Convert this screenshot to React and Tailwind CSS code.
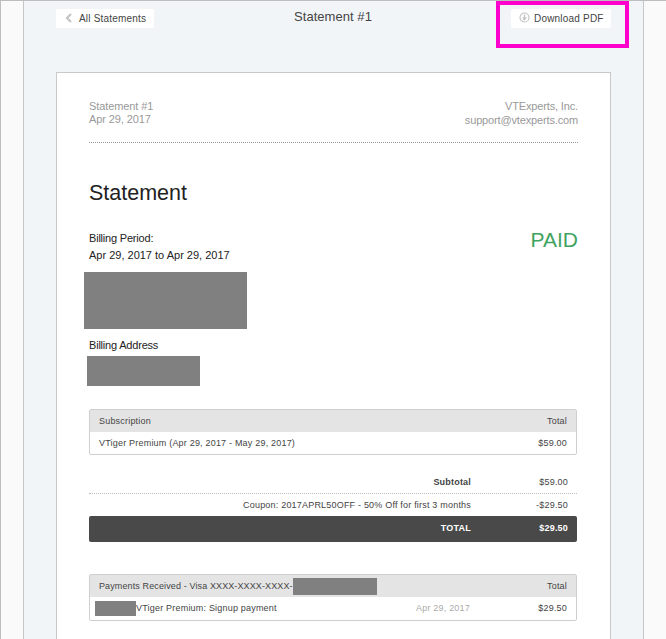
import React from "react";

function Btn({ icon, children, w }) {
  return (
    <div className={`h-[19px] flex items-center bg-white rounded-[2px] text-[10px] tracking-[0.2px] text-[#444] ${w}`}>
      {icon}
      {children}
    </div>
  );
}

export default function App() {
  return (
    <div className="relative w-[666px] h-[639px] overflow-hidden bg-[#fafafa] font-['Liberation_Sans',Arial,sans-serif] border-t border-l border-[#bdbdbd]">
      <div className="ml-[22px] w-[621px] h-[638px] bg-[#f2f5f8] border-x border-[#c6c6c6] px-[32px] overflow-hidden">
        <div className="h-[71px] flex items-start justify-between pt-[8px] relative">
          <Btn w="w-[98px] pl-[9px]" icon={
            <svg width="8" height="10" viewBox="0 0 8 10" className="mr-[6px] -mt-[2px]"><path d="M6 1 L2 5 L6 9" fill="none" stroke="#c4c4c4" strokeWidth="2.2" /></svg>
          }>All Statements</Btn>
          <div className="absolute left-[238px] top-[7px] text-[13px] leading-[18px] tracking-[0.05px] text-[#444]">Statement #1</div>
          <Btn w="w-[100px] pl-[8px]" icon={
            <svg width="11" height="11" viewBox="0 0 11 11" className="mr-[4px] -mt-[3px]"><circle cx="5.5" cy="5.5" r="4.5" fill="none" stroke="#c4c4c4" strokeWidth="1.2" /><path d="M5.5 2.5 V7 M3.8 5.5 L5.5 7.6 L7.2 5.5" fill="none" stroke="#c4c4c4" strokeWidth="1.3" /></svg>
          }>Download PDF</Btn>
        </div>

        <div className="w-[555px] h-[600px] bg-white border border-[#c9c9c9] px-[32px]">
          <div className="pt-[26px] h-[70px] flex justify-between border-b border-dotted border-[#999] text-[11px] text-[#999]">
            <div className="leading-[13px] pt-[1px] tracking-[-0.1px]">
              <div>Statement #1</div>
              <div>Apr 29, 2017</div>
            </div>
            <div className="text-right leading-[14px] tracking-[-0.15px]">
              <div>VTExperts, Inc.</div>
              <div>support@vtexperts.com</div>
            </div>
          </div>

          <div className="mt-[37px] text-[21.5px] leading-[26px] text-[#222]">Statement</div>

          <div className="mt-[24px] flex justify-between">
            <div className="text-[11px] leading-[17px] text-[#222]">
              <div className="tracking-[-0.2px]">Billing Period:</div>
              <div>Apr 29, 2017 to Apr 29, 2017</div>
            </div>
            <div className="text-[21px] leading-[24px] text-[#3fa35f] -mt-[2px]">PAID</div>
          </div>

          <div className="mt-[8px] -ml-[5px] w-[163px] h-[57px] bg-[#808080]" />
          <div className="mt-[9px] text-[11px] leading-[14px] tracking-[-0.2px] text-[#222]">Billing Address</div>
          <div className="mt-[4px] -ml-[2px] w-[113px] h-[30px] bg-[#808080]" />

          <div className="mr-[1px]">
            <div className="mt-[23px] border border-[#cfcfcf] rounded-[2px] text-[9px] tracking-[0.2px] text-[#444]">
              <div className="h-[22px] pt-[2px] bg-[#e4e4e4] flex items-center justify-between px-[9px]">
                <span>Subscription</span><span>Total</span>
              </div>
              <div className="h-[22px] pt-[2px] flex items-center justify-between px-[9px]">
                <span>VTiger Premium (Apr 29, 2017 - May 29, 2017)</span><span>$59.00</span>
              </div>
            </div>

            <div className="mt-[16px] text-[9px] tracking-[0.2px] text-[#444]">
              <div className="h-[23px] pt-[2px] flex items-center justify-end border-b border-dotted border-[#bbb]">
                <span className="font-bold">Subtotal</span><span className="w-[106px] text-right pr-[9px]">$59.00</span>
              </div>
              <div className="h-[22px] pt-[2px] flex items-center justify-end">
                <span>Coupon: 2017APRL50OFF - 50% Off for first 3 months</span><span className="w-[106px] text-right pr-[9px]">-$29.50</span>
              </div>
              <div className="h-[26px] flex items-center justify-end bg-[#494949] rounded-[2px] text-white font-bold">
                <span>TOTAL</span><span className="w-[106px] text-right pr-[9px]">$29.50</span>
              </div>
            </div>

            <div className="mt-[32px] border border-[#cfcfcf] rounded-[2px] text-[9px] tracking-[0.2px] text-[#444]">
              <div className="h-[22px] bg-[#e4e4e4] flex items-center px-[9px]">
                <span className="tracking-[0.12px] pt-[2px]">Payments Received - Visa XXXX-XXXX-XXXX-</span>
                <div className="w-[84px] h-[17px] bg-[#808080]" />
                <span className="ml-auto pt-[2px]">Total</span>
              </div>
              <div className="h-[23px] flex items-center pl-[5px] pr-[9px]">
                <div className="w-[41px] h-[15px] bg-[#808080]" />
                <span>VTiger Premium: Signup payment</span>
                <span className="ml-auto text-[#aaa]">Apr 29, 2017</span>
                <span className="w-[97px] text-right">$29.50</span>
              </div>
            </div>
          </div>
        </div>
      </div>
      <div className="absolute left-[495px] top-0 w-[133px] h-[47px] border-[4px] border-[#ff00cc]" />
    </div>
  );
}
